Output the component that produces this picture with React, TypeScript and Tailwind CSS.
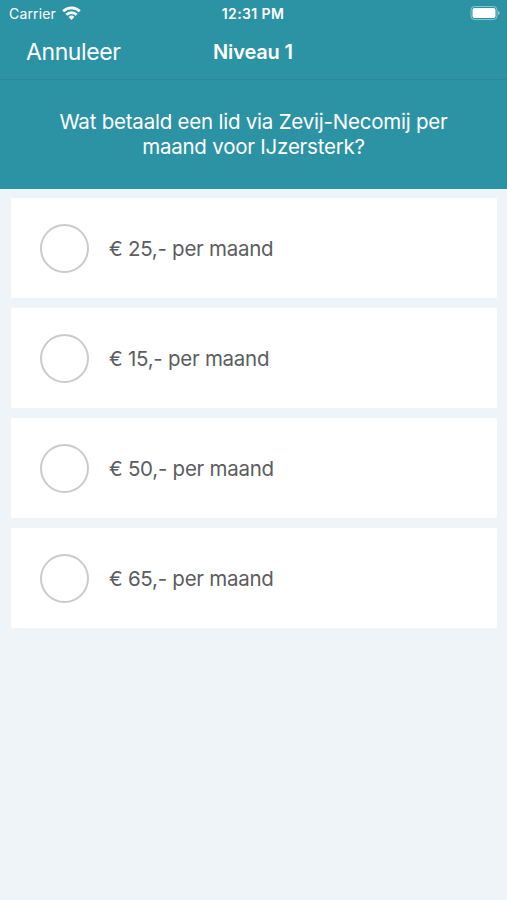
import React, { useState } from 'react';

const answers = [
  { id: 1, label: '€ 25,- per maand' },
  { id: 2, label: '€ 15,- per maand' },
  { id: 3, label: '€ 50,- per maand' },
  { id: 4, label: '€ 65,- per maand' },
];

function StatusBar() {
  return (
    <div className="grid h-[27px] grid-cols-3 items-center pl-[9px] pr-[7px]">
      <div className="flex items-center gap-[6px]">
        <span className="whitespace-nowrap text-[14px] tracking-[0.15px]">Carrier</span>
        <svg className="mb-[2px]" width="19" height="14" viewBox="0 0 19 14" fill="none" stroke="currentColor" strokeWidth="2.7">
          <path d="M1.2 5.2a11.8 11.8 0 0 1 16.6 0" />
          <path d="M4.4 8.7a7.2 7.2 0 0 1 10.2 0" />
          <path d="M9.5 14 6.600 11a4.100 4.100 0 0 1 5.800 0Z" fill="currentColor" stroke="none" />
        </svg>
      </div>
      <span className="-ml-[3px] whitespace-nowrap text-center text-[14px] font-semibold tracking-[0.4px]">12:31 PM</span>
      <svg className="mb-px justify-self-end" width="30" height="14" viewBox="0 0 30 14" fill="none">
        <rect x="1" y="0.5" width="26" height="13" rx="3.5" stroke="currentColor" strokeOpacity="0.45" />
        <rect x="2.5" y="2" width="23" height="10" rx="2" fill="currentColor" />
        <path d="M28 5v4c1-.3 1.6-1 1.6-2S29 5.3 28 5Z" fill="currentColor" fillOpacity="0.5" />
      </svg>
    </div>
  );
}

export default function App() {
  const [selected, setSelected] = useState<number | null>(null);

  return (
    <main className="min-h-screen bg-[#eff4f8] font-['Inter','Liberation_Sans',sans-serif]">
      <header className="bg-[#2c93a5] text-white">
        <StatusBar />
        <nav className="grid h-[53px] grid-cols-3 items-center border-b border-[#298a9c] px-[26px] pb-[2px]">
          <button className="justify-self-start text-[23px] tracking-[-0.4px]">Annuleer</button>
          <h1 className="-ml-px text-center text-[20px] font-semibold tracking-[-0.15px]">Niveau 1</h1>
        </nav>
        <p className="h-[109px] px-[50px] pt-[29px] text-center text-[20.5px] leading-[25px] tracking-[-0.22px]">
          Wat betaald een lid via Zevij-Necomij per
          <br />
          maand voor IJzersterk?
        </p>
      </header>

      <div className="flex flex-col gap-[10px] pl-[11px] pr-[10px] pt-[9px]">
        {answers.map((answer) => (
          <button
            key={answer.id}
            onClick={() => setSelected(answer.id)}
            className="flex h-[100px] items-center gap-[20px] rounded-[2px] bg-white pl-[29px] text-left text-[20.5px] tracking-[-0.26px] text-[#5c5d60]"
          >
            <span className="flex size-[49px] items-center justify-center rounded-full border-2 border-[#cbcbcb]">
              {selected === answer.id && <span className="size-[29px] rounded-full bg-[#2c93a5]" />}
            </span>
            <span className="pt-[2px]">{answer.label}</span>
          </button>
        ))}
      </div>
    </main>
  );
}
